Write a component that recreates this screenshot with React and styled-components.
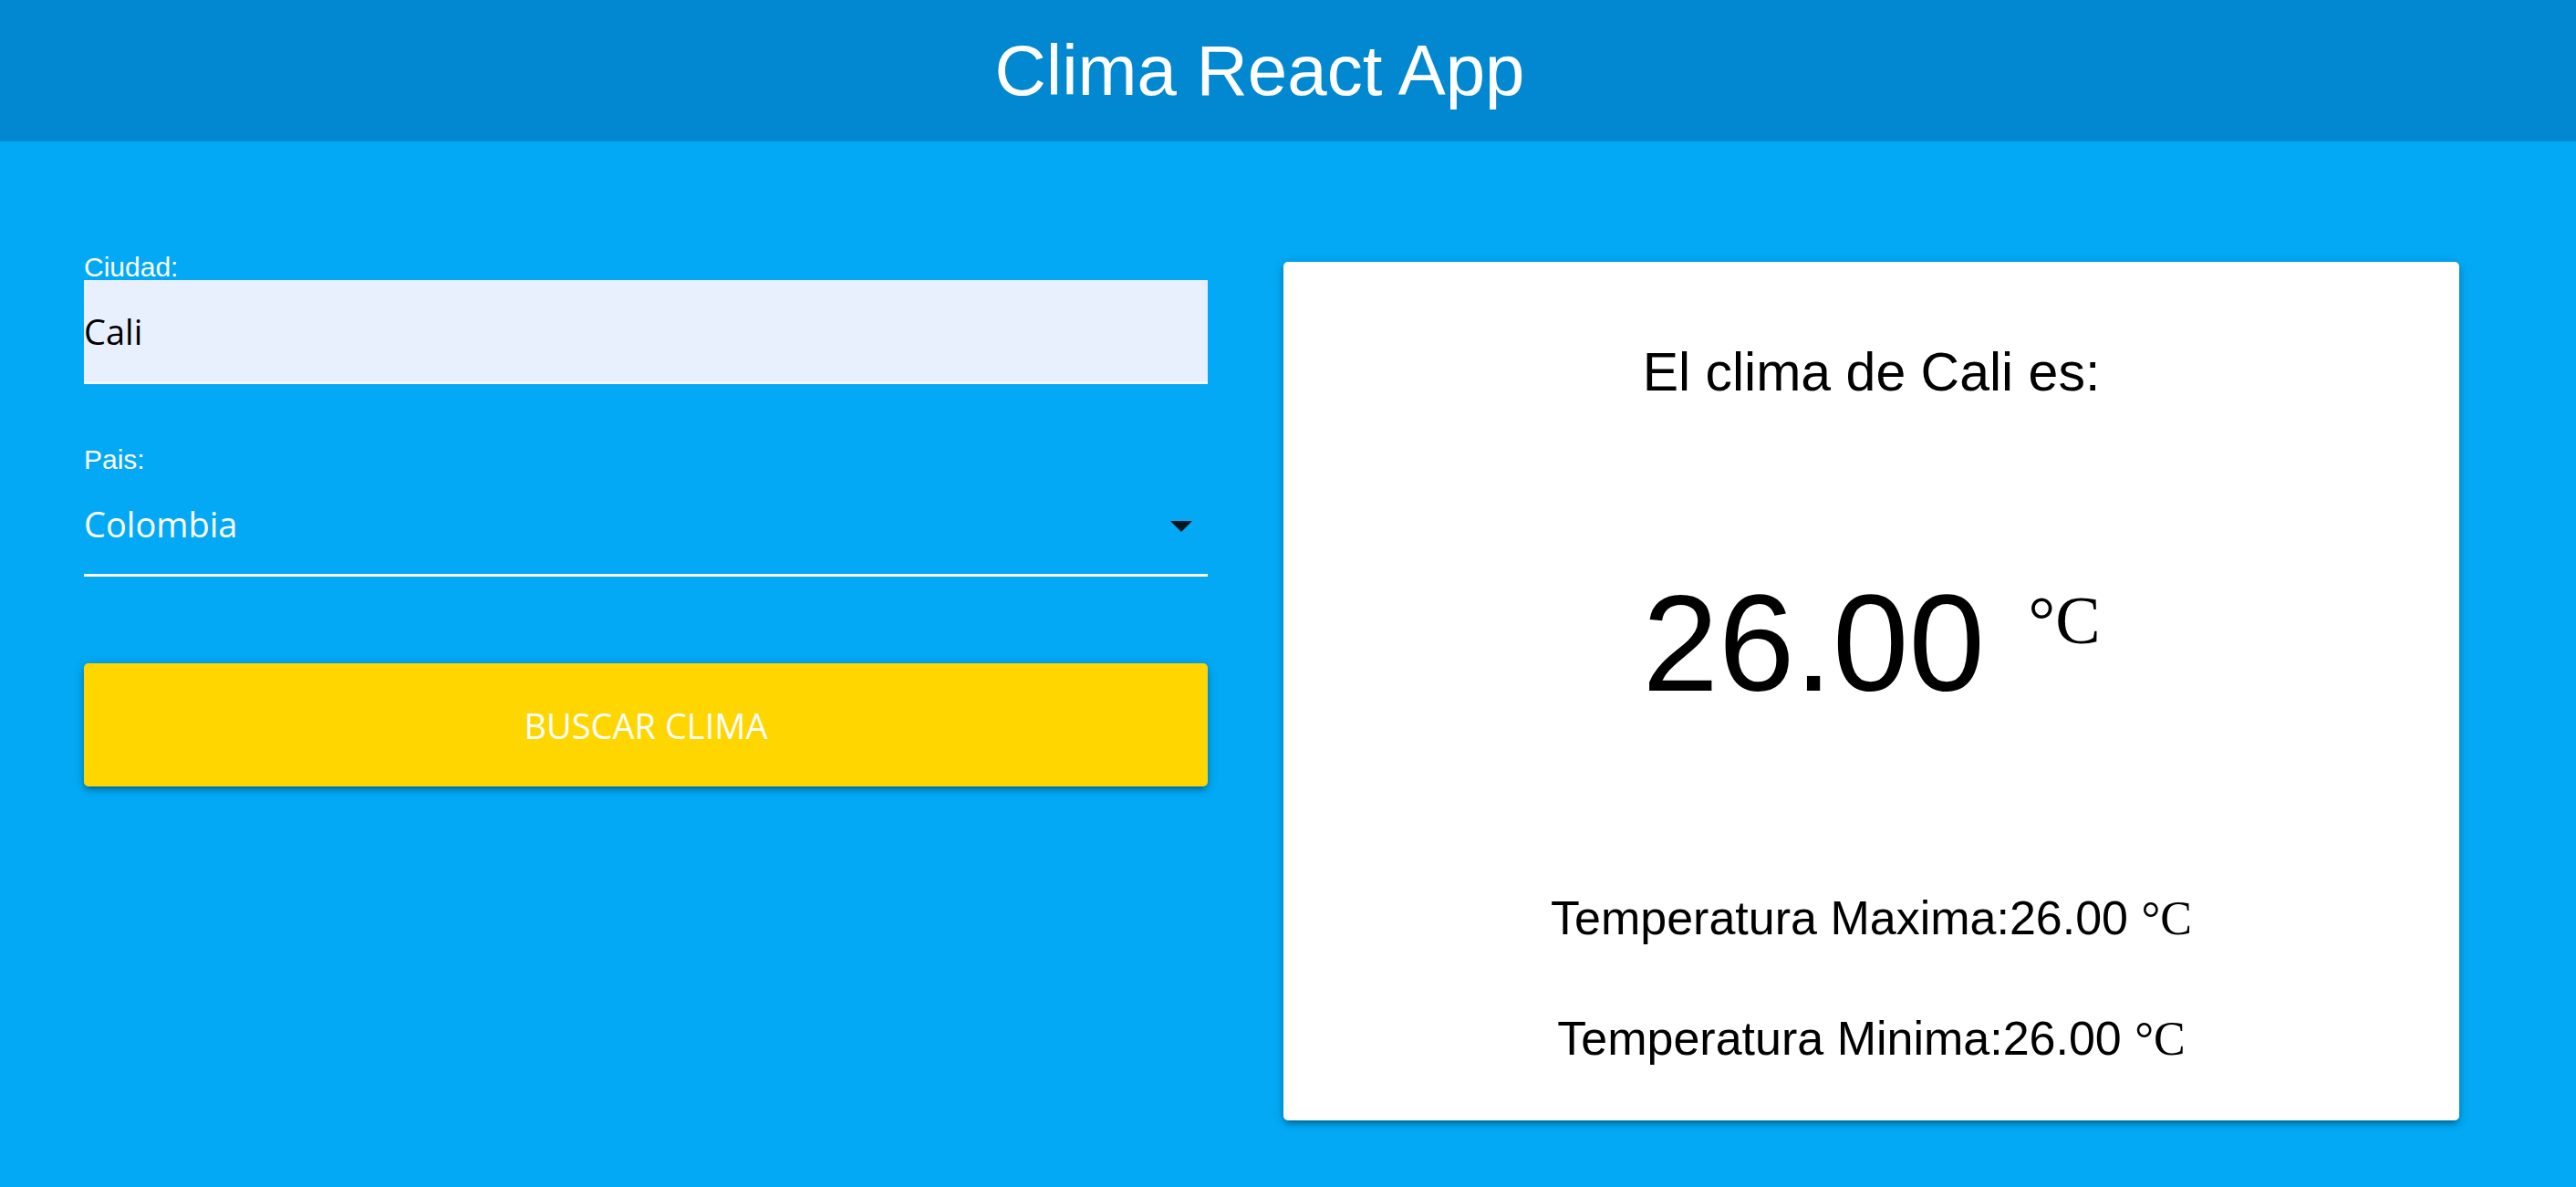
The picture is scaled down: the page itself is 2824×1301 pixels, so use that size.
import React from 'react';
import styled, { createGlobalStyle } from 'styled-components';

const GlobalStyle = createGlobalStyle`
  html, body {
    margin: 0;
    padding: 0;
    background: #03a9f4;
    font-family: "Liberation Sans", Arial, sans-serif;
  }
  * {
    box-sizing: border-box;
  }
`;

const Page = styled.div`
  min-height: 100vh;
  background: #03a9f4;
`;

const Header = styled.header`
  height: 155px;
  padding-right: 62px;
  background: #0288d1;
  color: #fff;
  text-align: center;
  font-size: 78px;
  line-height: 155px;
`;

const Main = styled.main`
  display: grid;
  grid-template-columns: 1232px 1289px;
  column-gap: 83px;
  align-items: start;
  padding: 124px 128px 0 92px;
`;

const Form = styled.form`
  display: flex;
  flex-direction: column;
`;

const Label = styled.label`
  display: block;
  color: #fff;
  font-size: 30px;
  line-height: 28px;
  margin-top: ${(p) => p.$gap || 0}px;
`;

const TextInput = styled.input`
  display: block;
  width: 100%;
  height: 114px;
  margin: 0;
  padding: 0;
  border: none;
  border-bottom: 2px solid #fff;
  background: #e8f0fe;
  color: #000;
  font-family: "Open Sans", "Noto Sans", sans-serif;
  font-size: 38px;
  outline: none;
`;

const SelectBox = styled.div`
  display: flex;
  align-items: center;
  justify-content: space-between;
  height: 114px;
  border-bottom: 3px solid #fff;
  padding-right: 17px;
  color: #fff;
  font-family: "Open Sans", "Noto Sans", sans-serif;
  font-size: 38px;
`;

const Caret = styled.span`
  width: 0;
  height: 0;
  border-left: 12.5px solid transparent;
  border-right: 12.5px solid transparent;
  border-top: 12px solid rgba(0, 0, 0, 0.87);
  margin-top: 6px;
`;

const Button = styled.button`
  display: block;
  width: 100%;
  height: 135px;
  margin-top: 95px;
  border: none;
  border-radius: 5px;
  background: #ffd600;
  color: #fff;
  font-family: "Open Sans", "Noto Sans", sans-serif;
  font-size: 38px;
  text-transform: uppercase;
  box-shadow: 0 5px 5px 0 rgba(0, 0, 0, 0.14), 0 7px 2px -5px rgba(0, 0, 0, 0.12),
    0 2px 12px 0 rgba(0, 0, 0, 0.2);
  cursor: pointer;
`;

const Card = styled.section`
  margin-top: 8px;
  height: 941px;
  padding: 92px 0 0;
  background: #fff;
  border-radius: 5px;
  box-shadow: 0 5px 5px 0 rgba(0, 0, 0, 0.14), 0 7px 2px -5px rgba(0, 0, 0, 0.12),
    0 2px 12px 0 rgba(0, 0, 0, 0.2);
  text-align: center;
  color: #000;
`;

const Heading = styled.h2`
  margin: 0;
  font-size: 59px;
  font-weight: 400;
  line-height: 59px;
`;

const Temp = styled.p`
  margin: 192px 0 0;
  font-size: 150px;
  line-height: 150px;
`;

const Unit = styled.span`
  font-family: "Liberation Serif", "Times New Roman", serif;
  font-size: ${(p) => p.$size || 52}px;
  line-height: 1;
  margin-left: ${(p) => p.$shift || 0}px;
  vertical-align: ${(p) => p.$raise || 0}px;
`;

const Line = styled.p`
  margin: ${(p) => p.$gap}px 0 0;
  font-size: 52px;
  line-height: 52px;
`;

export default function App() {
  return (
    <Page>
      <GlobalStyle />
      <Header>Clima React App</Header>
      <Main>
        <Form onSubmit={(e) => e.preventDefault()}>
          <Label htmlFor="ciudad">Ciudad:</Label>
          <TextInput id="ciudad" type="text" defaultValue="Cali" />
          <Label $gap={69}>Pais:</Label>
          <SelectBox>
            <span>Colombia</span>
            <Caret />
          </SelectBox>
          <Button type="submit">Buscar clima</Button>
        </Form>
        <Card>
          <Heading>El clima de Cali es:</Heading>
          <Temp>
            26.00 <Unit $size={74} $raise={52} $shift={6}>°C</Unit>
          </Temp>
          <Line $gap={200}>
            Temperatura Maxima:26.00 <Unit>°C</Unit>
          </Line>
          <Line $gap={79}>
            Temperatura Minima:26.00 <Unit>°C</Unit>
          </Line>
        </Card>
      </Main>
    </Page>
  );
}
